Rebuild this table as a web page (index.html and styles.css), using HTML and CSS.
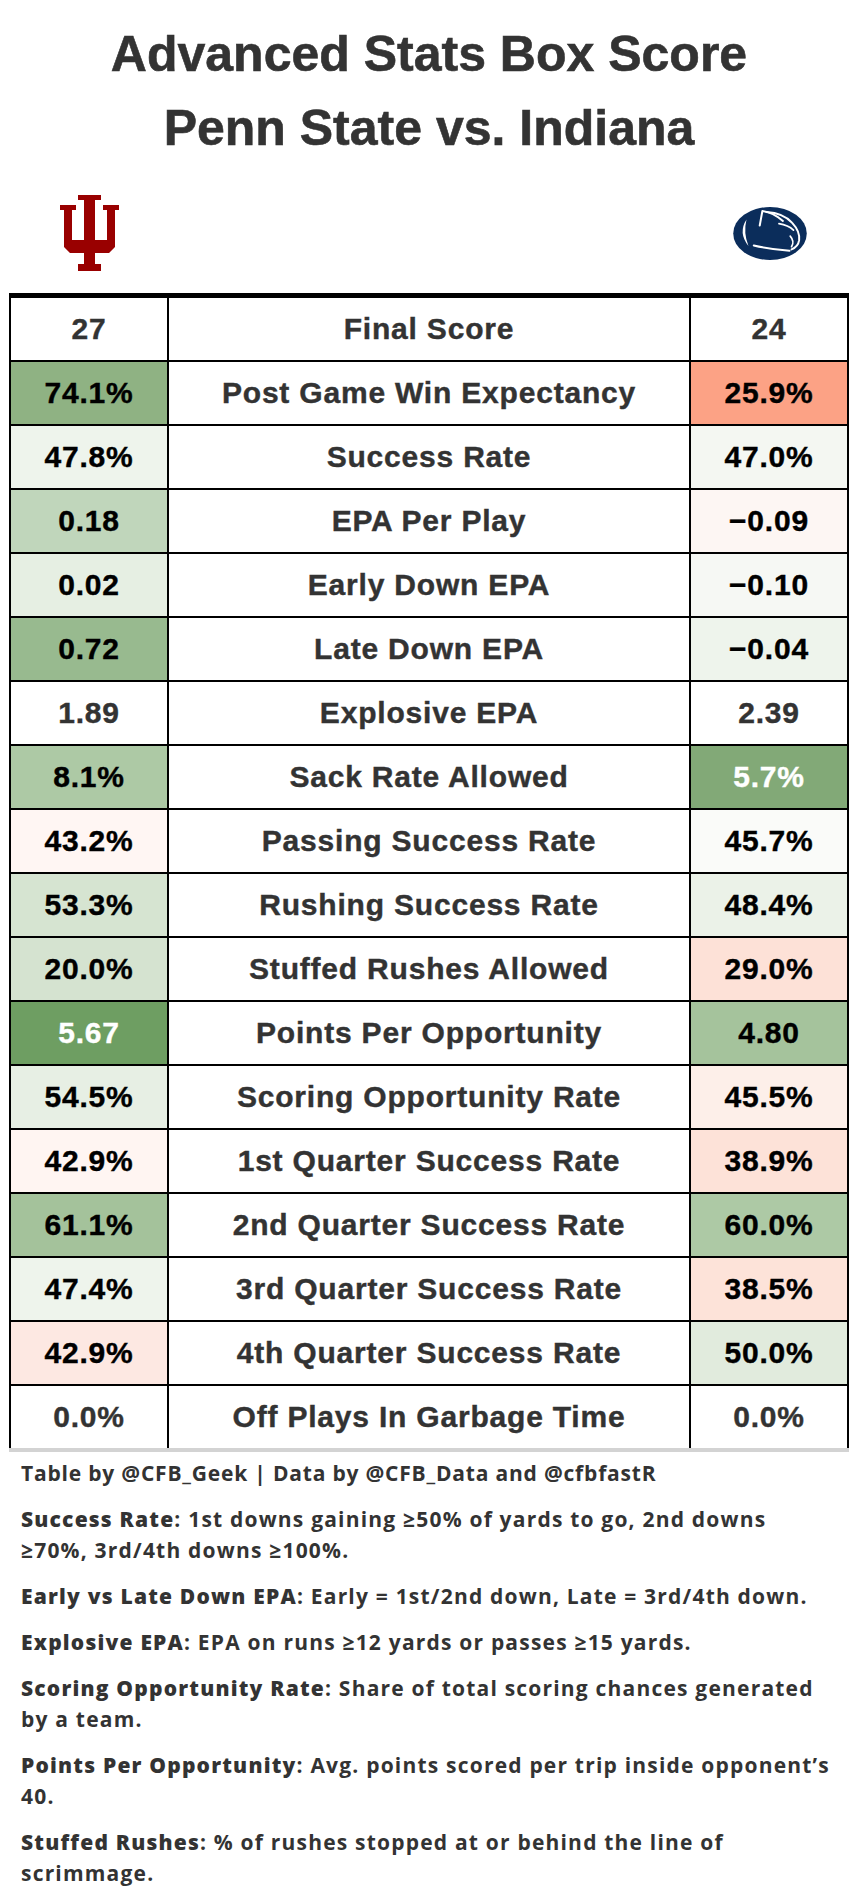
FILE: index.html
```html
<!DOCTYPE html>
<html lang="en">
<head>
<meta charset="utf-8">
<title>Advanced Stats Box Score</title>
<link rel="stylesheet" href="styles.css">
</head>
<body>
<div class="page">
  <h1 class="title">Advanced Stats Box Score<br>Penn State vs. Indiana</h1>
  <div class="logos">
    <svg class="logo-iu" width="59" height="76" viewBox="0 0 59 76" aria-label="Indiana">
      <path fill="#990000" d="M18 0H41V5H35V45H47V15H43V10H59V15H55V52L49 58H35V69H41V76H18V69H24V58H10L4 52V15H0V10H16V15H12V45H24V5H18Z"/>
    </svg>
    <svg class="logo-psu" width="74" height="53" viewBox="0 0 222 160" aria-label="Penn State">
      <ellipse cx="111" cy="80" rx="111" ry="80" fill="#0b2d5b"/>
      <path fill="#fff" d="M40 38 Q14 78 46 118 Q30 78 40 38Z"/>
      <path fill="none" stroke="#fff" stroke-width="6" stroke-linejoin="round" stroke-linecap="round" d="M80 56 L88 12 Q120 16 150 42"/>
      <path fill="none" stroke="#fff" stroke-width="6" stroke-linecap="round" d="M100 15 Q152 18 178 48 Q202 74 199 100 Q196 120 176 128"/>
      <path fill="none" stroke="#fff" stroke-width="5" stroke-linecap="round" d="M138 50 Q166 54 182 70"/>
      <path fill="none" stroke="#fff" stroke-width="5" stroke-linecap="round" d="M172 88 Q186 104 176 120"/>
      <path fill="none" stroke="#fff" stroke-width="6" stroke-linecap="round" d="M62 116 Q112 128 170 132"/>
    </svg>
  </div>
  <div class="box">
    <div class="cell side plain">27</div><div class="cell label">Final Score</div><div class="cell side plain">24</div>
    <div class="cell side" style="background:#8fb283">74.1%</div><div class="cell label">Post Game Win Expectancy</div><div class="cell side" style="background:#fca285">25.9%</div>
    <div class="cell side" style="background:#eef4ec">47.8%</div><div class="cell label">Success Rate</div><div class="cell side" style="background:#f4f7f2">47.0%</div>
    <div class="cell side" style="background:#c0d6bb">0.18</div><div class="cell label">EPA Per Play</div><div class="cell side" style="background:#fdf6f3">−0.09</div>
    <div class="cell side" style="background:#e6efe3">0.02</div><div class="cell label">Early Down EPA</div><div class="cell side" style="background:#f6f8f4">−0.10</div>
    <div class="cell side" style="background:#98ba8f">0.72</div><div class="cell label">Late Down EPA</div><div class="cell side" style="background:#eef4ec">−0.04</div>
    <div class="cell side plain">1.89</div><div class="cell label">Explosive EPA</div><div class="cell side plain">2.39</div>
    <div class="cell side" style="background:#adc9a5">8.1%</div><div class="cell label">Sack Rate Allowed</div><div class="cell side light" style="background:#82a977">5.7%</div>
    <div class="cell side" style="background:#fff6f3">43.2%</div><div class="cell label">Passing Success Rate</div><div class="cell side" style="background:#fafbf9">45.7%</div>
    <div class="cell side" style="background:#d6e4d1">53.3%</div><div class="cell label">Rushing Success Rate</div><div class="cell side" style="background:#ebf2e8">48.4%</div>
    <div class="cell side" style="background:#d5e3d0">20.0%</div><div class="cell label">Stuffed Rushes Allowed</div><div class="cell side" style="background:#fde1d7">29.0%</div>
    <div class="cell side light" style="background:#6e9e62">5.67</div><div class="cell label">Points Per Opportunity</div><div class="cell side" style="background:#a5c39c">4.80</div>
    <div class="cell side" style="background:#e7efe4">54.5%</div><div class="cell label">Scoring Opportunity Rate</div><div class="cell side" style="background:#fdefe9">45.5%</div>
    <div class="cell side" style="background:#fff5f2">42.9%</div><div class="cell label">1st Quarter Success Rate</div><div class="cell side" style="background:#fde2d8">38.9%</div>
    <div class="cell side" style="background:#a4c29b">61.1%</div><div class="cell label">2nd Quarter Success Rate</div><div class="cell side" style="background:#adc9a5">60.0%</div>
    <div class="cell side" style="background:#eef4ec">47.4%</div><div class="cell label">3rd Quarter Success Rate</div><div class="cell side" style="background:#fde3d9">38.5%</div>
    <div class="cell side" style="background:#fde8e2">42.9%</div><div class="cell label">4th Quarter Success Rate</div><div class="cell side" style="background:#e1ebdd">50.0%</div>
    <div class="cell side plain">0.0%</div><div class="cell label">Off Plays In Garbage Time</div><div class="cell side plain">0.0%</div>
  </div>
  <div class="notes">
    <p class="credit">Table by @CFB_Geek | Data by @CFB_Data and @cfbfastR</p>
    <p><b>Success Rate</b>: 1st downs gaining ≥50% of yards to go, 2nd downs ≥70%, 3rd/4th downs ≥100%.</p>
    <p><b>Early vs Late Down EPA</b>: Early = 1st/2nd down, Late = 3rd/4th down.</p>
    <p><b>Explosive EPA</b>: EPA on runs ≥12 yards or passes ≥15 yards.</p>
    <p><b>Scoring Opportunity Rate</b>: Share of total scoring chances generated by a team.</p>
    <p><b>Points Per Opportunity</b>: Avg. points scored per trip inside opponent’s 40.</p>
    <p><b>Stuffed Rushes</b>: % of rushes stopped at or behind the line of scrimmage.</p>
  </div>
</div>
</body>
</html>
```
FILE: styles.css
```css
html, body {
  margin: 0;
  padding: 0;
  background: #ffffff;
}
.page {
  width: 858px;
  font-family: "Liberation Sans", Arial, sans-serif;
  color: #333333;
}
.title {
  margin: 0;
  padding-top: 17px;
  font-size: 50px;
  line-height: 74px;
  font-weight: 700;
  text-align: center;
  color: #333333;
  -webkit-text-stroke: 0.6px #333333;
}
.logos {
  display: flex;
  justify-content: space-between;
  align-items: center;
  height: 76px;
  margin-top: 30px;
  padding: 0 51px 0 60px;
}
.logos svg {
  display: block;
}
.box {
  margin: 22px 9px 0 9px;
  display: grid;
  grid-template-columns: 156px 520px 156px;
  grid-auto-rows: 62px;
  gap: 2px;
  background: #000000;
  padding: 0 2px;
  border-top: 5px solid #000000;
  border-bottom: 4px solid #d3d3d3;
}
.cell {
  display: flex;
  align-items: center;
  justify-content: center;
  background: #ffffff;
  font-size: 30px;
  font-weight: 700;
  letter-spacing: 0.8px;
  -webkit-text-stroke: 0.4px currentColor;
}
.label {
  color: #333333;
}
.side {
  color: #000000;
}
.side.plain {
  color: #333333;
}
.side.light {
  color: #ffffff;
}
.notes {
  padding: 6px 22px 0 21px;
  font-family: "Open Sans", "Liberation Sans", sans-serif;
  font-size: 21px;
  line-height: 31px;
  font-weight: 700;
  letter-spacing: 1.2px;
  color: #333333;
}
.notes p {
  margin: 0 0 15px 0;
}
.notes .credit {
  letter-spacing: 0.8px;
}
.notes b {
  font-weight: 800;
}
```
